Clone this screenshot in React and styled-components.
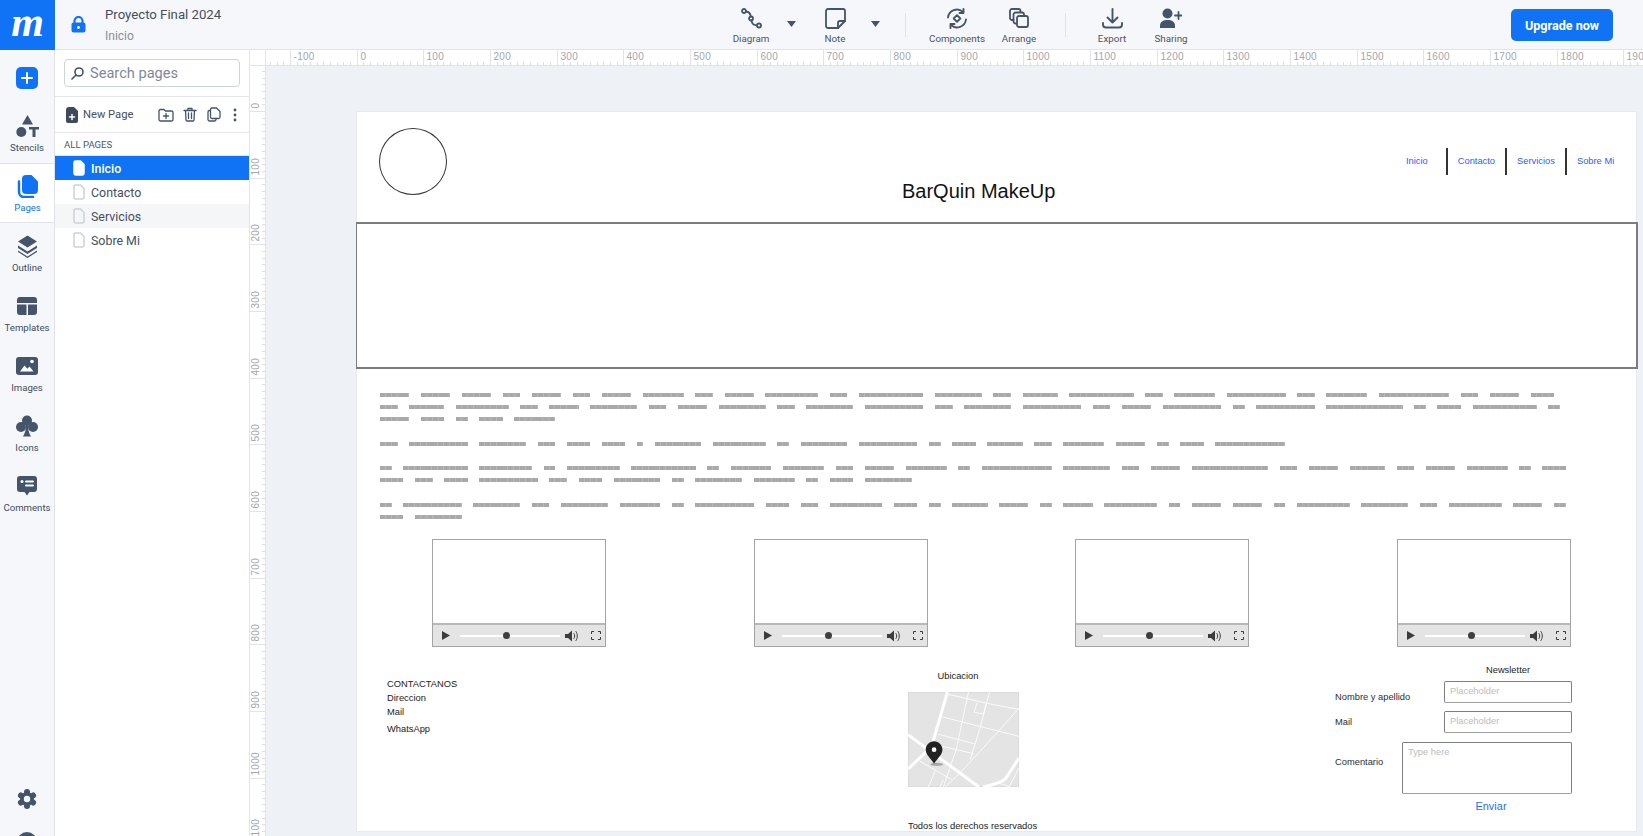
import React from "react";
import styled, { createGlobalStyle } from "styled-components";

const BLUE = "#1073f5";
const INK = "#44546a";

const Global = createGlobalStyle`
  html, body { margin: 0; padding: 0; height: 100%; overflow: hidden; background: #fff; }
  #root { height: 100%; }
  * { box-sizing: border-box; }
  body { font-family: Roboto, "Liberation Sans", sans-serif; color: #3a4656; }
`;

const Shell = styled.div`
  width: 1643px;
  height: 836px;
  display: flex;
  flex-direction: column;
  overflow: hidden;
`;

/* ---------- top bar ---------- */
const TopBar = styled.header`
  height: 50px;
  flex: none;
  display: flex;
  background: #f6f7fa;
  border-bottom: 1px solid #e0e3e9;
`;
const Logo = styled.div`
  width: 55px;
  height: 50px;
  background: ${BLUE};
  color: #fff;
  font: italic 700 42px/42px "Liberation Serif", serif;
  display: flex;
  align-items: center;
  justify-content: center;
  padding-bottom: 6px;
`;
const ProjectArea = styled.div`
  width: 666px;
  display: flex;
  align-items: center;
  padding-left: 16px;
`;
const ProjectText = styled.div`
  margin-left: 19px;
  display: flex;
  flex-direction: column;
  gap: 6px;
`;
const ProjectName = styled.div`
  font-size: 13.2px;
  line-height: 16px;
  color: #444f5e;
`;
const ProjectPage = styled.div`
  font-size: 12px;
  line-height: 14px;
  color: #87909d;
`;
const Tool = styled.div`
  width: ${(p) => p.$w}px;
  flex: none;
  display: flex;
  flex-direction: column;
  align-items: center;
  padding-top: 8px;
  color: ${INK};
`;
const ToolIcon = styled.div`
  height: 22px;
  display: flex;
  align-items: flex-start;
`;
const ToolLabel = styled.div`
  margin-top: 3px;
  font-size: 9.8px;
  line-height: 12px;
  color: #4a5564;
  white-space: nowrap;
`;
const Caret = styled.div`
  width: 24px;
  flex: none;
  display: flex;
  justify-content: center;
  padding: 21px 4px 0 0;
`;
const ToolDivider = styled.div`
  width: 1px;
  height: 24px;
  flex: none;
  margin: 13px ${(p) => p.$r}px 0 ${(p) => p.$l}px;
  background: #e0e3e9;
`;
const Upgrade = styled.button`
  margin: 9px 30px 0 auto;
  width: 102px;
  height: 32px;
  border: 0;
  border-radius: 5px;
  background: ${BLUE};
  color: #fff;
  font: 700 12.6px Roboto, sans-serif;
  padding: 0;
`;

/* ---------- body ---------- */
const Body = styled.div`
  flex: 1;
  display: flex;
  min-height: 0;
`;
const Rail = styled.nav`
  width: 55px;
  flex: none;
  display: flex;
  flex-direction: column;
  background: #f6f7fa;
  border-right: 1px solid #dfe2e8;
  overflow: hidden;
`;
const PlusSlot = styled.div`
  height: 53px;
  flex: none;
  padding: 17px 0 0 16px;
`;
const PlusButton = styled.div`
  width: 22px;
  height: 22px;
  border-radius: 5px;
  background: ${BLUE};
  display: flex;
  align-items: center;
  justify-content: center;
`;
const RailItem = styled.div`
  height: 60px;
  flex: none;
  display: flex;
  flex-direction: column;
  align-items: center;
  padding-top: 10px;
  margin-right: ${(p) => (p.$active ? "-1px" : "0")};
  background: ${(p) => (p.$active ? "#fff" : "transparent")};
  border-top: 1px solid ${(p) => (p.$active ? "#e0e3e9" : "transparent")};
  border-bottom: 1px solid ${(p) => (p.$active ? "#e0e3e9" : "transparent")};
  color: ${(p) => (p.$active ? BLUE : INK)};
`;
const RailIcon = styled.div`
  height: 24px;
  display: flex;
  align-items: center;
`;
const RailLabel = styled.div`
  margin-top: 4px;
  font-size: 9.6px;
  line-height: 12px;
  color: ${(p) => (p.$active ? BLUE : "#414d5d")};
  white-space: nowrap;
`;
const SettingsSlot = styled.div`
  margin-top: auto;
  height: 20px;
  flex: none;
  display: flex;
  justify-content: center;
  color: ${INK};
`;
const Avatar = styled.div`
  width: 20px;
  height: 20px;
  flex: none;
  margin: 23px auto -16px;
  border-radius: 50%;
  background: ${INK};
`;

const Panel = styled.aside`
  width: 195px;
  flex: none;
  background: #fff;
  border-right: 1px solid #e0e3e9;
  display: flex;
  flex-direction: column;
`;
const SearchRow = styled.div`
  height: 47px;
  flex: none;
  padding: 9px 9px 0;
  border-bottom: 1px solid #e6e8ed;
`;
const SearchBox = styled.div`
  height: 28px;
  display: flex;
  align-items: center;
  gap: 6px;
  padding-left: 6px;
  border: 1px solid #cfd3da;
  border-radius: 4px;
  color: #434f5f;
`;
const SearchText = styled.span`
  font-size: 14.6px;
  color: #7f8996;
`;
const ActionRow = styled.div`
  height: 36px;
  flex: none;
  display: flex;
  align-items: center;
  padding-left: 11px;
  border-bottom: 1px solid #e6e8ed;
  color: ${INK};
`;
const NewPage = styled.span`
  margin-left: 5px;
  margin-right: 23px;
  font-size: 11.2px;
  color: #44505f;
  width: 52px;
  white-space: nowrap;
`;
const ActionIcon = styled.span`
  display: flex;
  width: ${(p) => p.$w}px;
  justify-content: flex-start;
`;
const ListHeading = styled.div`
  height: 23px;
  flex: none;
  padding-left: 9px;
  display: flex;
  align-items: center;
  font-size: 9.6px;
  color: #4d5866;
  border-bottom: 1px solid #e6e8ed;
`;
const PageRow = styled.div`
  height: 24px;
  display: flex;
  align-items: center;
  gap: 6px;
  padding-left: 18px;
  font-size: 12.4px;
  background: ${(p) => (p.$active ? BLUE : p.$hover ? "#f5f6f8" : "transparent")};
  color: ${(p) => (p.$active ? "#fff" : "#45505f")};
  font-weight: ${(p) => (p.$active ? 500 : 400)};
`;

/* ---------- workspace ---------- */
const Workspace = styled.main`
  flex: 1;
  min-width: 0;
  display: grid;
  grid-template-columns: 16px 1fr;
  grid-template-rows: 16px 1fr;
  overflow: hidden;
`;
const Corner = styled.div`
  background: #fff;
  border-right: 1px solid #e0e3e9;
  border-bottom: 1px solid #e0e3e9;
`;
const RulerSvg = styled.svg`
  display: block;
  background: #fff;
  text {
    font: 10px "Liberation Sans", sans-serif;
    letter-spacing: 0.3px;
    fill: #a2a6ac;
  }
`;
const Canvas = styled.div`
  background: #eef1f6;
  padding: 46px 0 0 90px;
  overflow: hidden;
`;

/* ---------- wireframe page ---------- */
const Page = styled.section`
  width: 1281px;
  height: 721px;
  background: #fff;
  border: 1px solid #e6e9ee;
  margin: -1px 0 0 0;
  display: flex;
  flex-direction: column;
  font-family: "Liberation Sans", sans-serif;
  color: #222;
`;
const WireHead = styled.div`
  height: 110px;
  flex: none;
  position: relative;
`;
const WireCircle = styled.div`
  position: absolute;
  left: 22px;
  top: 16px;
  width: 68px;
  height: 67px;
  border-radius: 50%;
  border: 1px solid #333;
`;
const WireTitle = styled.div`
  position: absolute;
  left: 545px;
  top: 67px;
  font-size: 20px;
  line-height: 24px;
  color: #111;
  white-space: nowrap;
`;
const WireNav = styled.div`
  position: absolute;
  left: 1029px;
  top: 36px;
  display: flex;
`;
const WireLink = styled.div`
  width: 59.6px;
  height: 27px;
  display: flex;
  align-items: center;
  justify-content: center;
  padding-bottom: 2px;
  font-size: 9.33px;
  color: #2f5cff;
  border-left: 2px solid ${(p) => (p.$first ? "transparent" : "#333")};
`;
const Hero = styled.div`
  height: 147px;
  flex: none;
  margin-left: -1px;
  margin-right: -2px;
  border: 2px solid #7c7c7c;
  border-width: 2px 2px 2px 1px;
`;
const Greek = styled.div`
  margin: 24px 0 0 23px;
  display: flex;
  flex-direction: column;
  gap: 12.5px;
`;
const GreekPara = styled.div`
  display: flex;
  flex-direction: column;
`;
const GreekLine = styled.div`
  height: 12px;
  display: flex;
  gap: 11.65px;
`;
const GreekWord = styled.span`
  display: block;
  height: 4px;
  width: ${(p) => (p.$n * 5.85).toFixed(2)}px;
  background: repeating-linear-gradient(90deg, #a9a9a9 0 5px, #b8b8b8 5px 5.85px);
`;
const Videos = styled.div`
  margin: 12.5px 0 0 75px;
  display: flex;
  gap: 147.6px;
`;
const Video = styled.div`
  width: 174px;
  height: 108px;
  flex: none;
  display: flex;
  flex-direction: column;
  border: 1px solid #a4a4a4;
`;
const VideoScreen = styled.div`
  flex: 1;
  background: #fff;
`;
const VideoBar = styled.div`
  height: 23px;
  flex: none;
  display: flex;
  align-items: center;
  padding-left: 9px;
  background: #e4e4e4;
  border-top: 2px solid #b8b8b8;
  color: #3c3c3c;
`;
const Slider = styled.div`
  position: relative;
  width: 100px;
  height: 2px;
  margin: 0 5px 0 10px;
  background: #fff;
`;
const SliderThumb = styled.div`
  position: absolute;
  left: 43px;
  top: -3px;
  width: 7px;
  height: 7px;
  border-radius: 50%;
  background: #3f3f3f;
`;
const FullSpacer = styled.span`
  width: 13px;
  flex: none;
`;
const WireFooter = styled.div`
  flex: 1;
  position: relative;
  font-size: 9.33px;
  color: #222;
`;
const ContactBlock = styled.div`
  position: absolute;
  left: 30px;
  top: 30px;
  line-height: 14px;
`;
const WhatsApp = styled.div`
  margin-top: 3px;
`;
const MapBlock = styled.div`
  position: absolute;
  left: 551px;
  top: 23px;
  width: 111px;
`;
const MapTitle = styled.div`
  height: 12px;
  line-height: 12px;
  text-align: center;
  padding-right: 11px;
  margin-bottom: 10px;
`;
const MapBox = styled.svg`
  display: block;
  width: 111px;
  height: 95px;
`;
const Rights = styled.div`
  margin-top: 33px;
  line-height: 12px;
  white-space: nowrap;
`;
const FormBlock = styled.div`
  position: absolute;
  left: 978px;
  top: 17px;
  width: 237px;
  display: flex;
  flex-direction: column;
`;
const FormTitle = styled.div`
  height: 12px;
  line-height: 12px;
  margin: 0 0 5px 109px;
  text-align: center;
`;
const FormRow = styled.div`
  display: flex;
  justify-content: space-between;
  margin-bottom: ${(p) => p.$gap}px;
`;
const FormLabel = styled.div`
  line-height: 12px;
  margin-top: ${(p) => p.$top}px;
  color: #2a2f36;
`;
const Field = styled.div`
  width: ${(p) => p.$w}px;
  height: ${(p) => p.$h}px;
  padding: 4px 0 0 5px;
  border: 1px solid #7f7f7f;
  border-bottom-color: #a0a0a0;
  border-radius: 2px;
  color: #bcbcbc;
  line-height: 11px;
`;
const Send = styled.div`
  margin: 6px 0 0 126px;
  width: 60px;
  text-align: center;
  font-size: 11px;
  line-height: 13px;
  color: #2b6df5;
`;

/* ---------- drawings ---------- */
const IconSvg = styled.svg`
  display: block;
`;
const Svg = ({ w, h, vb, children, stroke, sw, fill = "none" }) => (
  <IconSvg
    width={w}
    height={h}
    viewBox={vb || `0 0 ${w} ${h}`}
    fill={fill}
    stroke={stroke}
    strokeWidth={sw}
    strokeLinecap="round"
    strokeLinejoin="round"
  >
    {children}
  </IconSvg>
);

const DiagramIcon = () => (
  <Svg w={21} h={21} stroke="currentColor" sw={1.8}>
    <circle cx="3" cy="3" r="2" />
    <circle cx="10" cy="10.500" r="2" />
    <circle cx="18" cy="17.500" r="2" />
    <path d="M5 3.500c3 .3 4.500 2 4.700 5M10.500 12.500c.3 3 2 4.800 5.500 5" />
  </Svg>
);
const NoteIcon = () => (
  <Svg w={21} h={21} stroke="currentColor" sw={1.8}>
    <path d="M3 1h15a2 2 0 0 1 2 2v10l-7 7H3a2 2 0 0 1-2-2V3a2 2 0 0 1 2-2z" />
    <path d="M20 13h-5a2 2 0 0 0-2 2v5" />
  </Svg>
);
const ComponentsIcon = () => (
  <Svg w={22} h={21} stroke="currentColor" sw={1.9}>
    <path d="M2 9.500A9 9 0 0 1 17 4" />
    <path d="M20 11.500A9 9 0 0 1 5 17" />
    <path d="M17.500 1v4h-4M4.500 20v-4h4" />
    <path d="M11 7.200l3.300 3.300L11 13.800l-3.300-3.300z" />
  </Svg>
);
const ArrangeIcon = () => (
  <Svg w={20} h={20} stroke="currentColor" sw={1.8}>
    <path d="M4.500 12H3a2 2 0 0 1-2-2V3a2 2 0 0 1 2-2h6.500a2 2 0 0 1 2 2v1" />
    <path d="M7.500 15.500H6.500a2 2 0 0 1-2-2V6.500a2 2 0 0 1 2-2h6.500a2 2 0 0 1 2 2v1" />
    <rect x="8" y="8" width="11" height="11" rx="2" />
  </Svg>
);
const ExportIcon = () => (
  <Svg w={21} h={21} stroke="currentColor" sw={1.9}>
    <path d="M10.500 1v13.500M5.500 9.500l5 5 5-5" />
    <path d="M1 15v1.500a3 3 0 0 0 3 3h13a3 3 0 0 0 3-3V15" />
  </Svg>
);
const SharingIcon = () => (
  <Svg w={22} h={21}>
    <circle cx="7.500" cy="5.500" r="5" fill="currentColor" />
    <path d="M0 20v-2.500C0 14 3 12 7.500 12S15 14 15 17.500V20z" fill="currentColor" />
    <path d="M18.500 4v7M15 7.500h7" stroke="currentColor" strokeWidth="1.800" />
  </Svg>
);
const CaretIcon = () => (
  <Svg w={9} h={6}>
    <path d="M0 0h9L4.500 6z" fill={INK} />
  </Svg>
);
const LockIcon = () => (
  <Svg w={15} h={17}>
    <path d="M3.500 7V5a4 4 0 0 1 8 0v2" stroke={BLUE} strokeWidth="2.200" />
    <rect x="0.500" y="6.500" width="14" height="10" rx="2" fill={BLUE} />
    <circle cx="7.500" cy="11.500" r="1.400" fill="#fff" />
  </Svg>
);
const StencilsIcon = () => (
  <Svg w={23} h={24}>
    <path d="M11.500 1l5.500 9.500H6z" fill="currentColor" />
    <circle cx="5.300" cy="18" r="5" fill="currentColor" />
    <path d="M13 13h10v2.500h-3.500V23h-3v-7.500H13z" fill="currentColor" />
  </Svg>
);
const PagesIcon = () => (
  <Svg w={22} h={23}>
    <path d="M9 0h5.500L21 6.500V15a4 4 0 0 1-4 4H9a4 4 0 0 1-4-4V4a4 4 0 0 1 4-4z" fill="currentColor" />
    <path d="M2 6.500V17a5 5 0 0 0 5 5h9" stroke="currentColor" strokeWidth="2.500" />
  </Svg>
);
const OutlineIcon = () => (
  <Svg w={21} h={23}>
    <path d="M10.500 0.500l9.500 6-9.500 6-9.500-6z" fill="currentColor" />
    <path d="M1 10.500l9.500 6 9.500-6v2.500l-9.500 6-9.500-6z" fill="currentColor" />
    <path d="M1 15.500l9.500 6 9.500-6v1.500l-9.500 6-9.500-6z" fill="currentColor" />
  </Svg>
);
const TemplatesIcon = () => (
  <Svg w={20} h={18}>
    <path d="M3 0h14a3 3 0 0 1 3 3v3H0V3a3 3 0 0 1 3-3z" fill="currentColor" />
    <path d="M0 7.500h9.500V18H3a3 3 0 0 1-3-3zM11 7.500h9V15a3 3 0 0 1-3 3h-6z" fill="currentColor" />
  </Svg>
);
const ImagesIcon = () => (
  <Svg w={22} h={18}>
    <rect width="22" height="18" rx="3" fill="currentColor" />
    <path d="M4 14.500l4.500-6 3 3.200 2-2.200 4 5z" fill="#fff" />
    <circle cx="16" cy="4.500" r="1.800" fill="#fff" />
  </Svg>
);
const ClubIcon = () => (
  <Svg w={22} h={22}>
    <circle cx="11" cy="5.500" r="5" fill="currentColor" />
    <circle cx="5" cy="12" r="5" fill="currentColor" />
    <circle cx="17" cy="12" r="5" fill="currentColor" />
    <path d="M10 10h2c0 4 .8 8 3 11.500H7c2.200-3.500 3-7.500 3-11.500z" fill="currentColor" />
  </Svg>
);
const CommentsIcon = () => (
  <Svg w={20} h={20}>
    <path d="M3 0h14a3 3 0 0 1 3 3v10a3 3 0 0 1-3 3h-4.500L10 19.500 7.500 16H3a3 3 0 0 1-3-3V3a3 3 0 0 1 3-3z" fill="currentColor" />
    <circle cx="5" cy="5.500" r="1.500" fill="#fff" />
    <path d="M9 5.500h7M9 9.500h7" stroke="#fff" strokeWidth="2" />
  </Svg>
);
const GearIcon = () => (
  <Svg w={20} h={20}>
    {[0, 60, 120, 180, 240, 300].map((a) => (
      <circle key={a} cx="10" cy="3" r="3" fill="currentColor" transform={`rotate(${a} 10 10)`} />
    ))}
    <circle cx="10" cy="10" r="7" fill="currentColor" />
    <circle cx="10" cy="10" r="3.200" fill="#f6f7fa" />
  </Svg>
);
const SearchIcon = () => (
  <Svg w={13} h={13} stroke="currentColor" sw={1.6}>
    <circle cx="8" cy="5" r="4" />
    <path d="M5 8l-4 4" />
  </Svg>
);
const DocIcon = ({ on }) => (
  <Svg w={12} h={16}>
    <path
      d="M2.500 1H7.500L11 4.500V13a2 2 0 0 1-2 2H3a2 2 0 0 1-2-2V2.500A1.500 1.500 0 0 1 2.500 1z"
      stroke={on ? "#fff" : "#cdd1d7"}
      strokeWidth="1.500"
      fill={on ? "#fff" : "none"}
    />
  </Svg>
);
const NewDocIcon = () => (
  <Svg w={12} h={16}>
    <path d="M3 0h5l4 4v10a2 2 0 0 1-2 2H2a2 2 0 0 1-2-2V3a3 3 0 0 1 3-3z" fill="#3d4a5c" />
    <path d="M6 7.500v5M3.500 10h5" stroke="#fff" strokeWidth="1.500" />
  </Svg>
);
const FolderPlus = () => (
  <Svg w={16} h={14} stroke="currentColor" sw={1.3}>
    <path d="M1 3a1.500 1.500 0 0 1 1.500-1.500H6L7.500 3h6A1.500 1.500 0 0 1 15 4.500v7a1.500 1.500 0 0 1-1.500 1.500h-11A1.500 1.500 0 0 1 1 11.500z" />
    <path d="M8 5.500v5M5.500 8h5" />
  </Svg>
);
const TrashIcon = () => (
  <Svg w={14} h={15} stroke="currentColor" sw={1.3}>
    <path d="M1 3.500h12M5 3.500V1.500h4v2M2.500 3.500l.5 9.500a1 1 0 0 0 1 1h6a1 1 0 0 0 1-1l.5-9.500M5.500 6v5.500M8.500 6v5.500" />
  </Svg>
);
const CopyIcon = () => (
  <Svg w={14} h={15} stroke="currentColor" sw={1.3}>
    <path d="M5 1h4.500L13 4.500V10a1.500 1.500 0 0 1-1.500 1.500H5A1.500 1.500 0 0 1 3.500 10V2.500A1.500 1.500 0 0 1 5 1z" />
    <path d="M3.500 3.500h-1A1.500 1.500 0 0 0 1 5v7.500A1.500 1.500 0 0 0 2.500 14h5A1.500 1.500 0 0 0 9 12.500v-1" />
  </Svg>
);
const DotsIcon = () => (
  <Svg w={4} h={14}>
    <circle cx="2" cy="2" r="1.400" fill="currentColor" />
    <circle cx="2" cy="7" r="1.400" fill="currentColor" />
    <circle cx="2" cy="12" r="1.400" fill="currentColor" />
  </Svg>
);
const PlayIcon = () => (
  <Svg w={8} h={9}>
    <path d="M0 0l8 4.500L0 9z" fill="currentColor" />
  </Svg>
);
const VolumeIcon = () => (
  <Svg w={13} h={12}>
    <path d="M0 4h3l4-3.500v11L3 8H0z" fill="currentColor" />
    <path d="M9 3.500c1 1.500 1 3.500 0 5M11 1.500c1.800 2.500 1.800 6.500 0 9" stroke="currentColor" strokeWidth="1" />
  </Svg>
);
const FullIcon = () => (
  <Svg w={10} h={9} stroke="currentColor" sw={1}>
    <path d="M.5 3V.5H3M7 .5h2.500V3M.5 6v2.500H3M7 8.500h2.500V6" strokeLinecap="butt" strokeLinejoin="miter" />
  </Svg>
);
const MapArt = () => (
  <MapBox viewBox="84 37 332 285" preserveAspectRatio="none">
    <rect x="84" y="37" width="332" height="285" fill="#e4e4e4" stroke="#d2d2d2" strokeWidth="3" />
    <g stroke="#fff" fill="none">
      <g strokeWidth="9">
        <path d="M202 37l-45 155" />
        <path d="M84 165L296 322" />
        <path d="M84 268l66-62" />
        <path d="M416 235l-40 62c-12 12-35 18-68 25" />
      </g>
      <g strokeWidth="2.500">
        <path d="M205 44l120 28 90 17" />
        <path d="M188 112l228 58" />
        <path d="M175 164l110 29" />
        <path d="M165 195l115 27" />
        <path d="M265 37l-37 173-38 112" />
        <path d="M328 37l-30 113-28 90" />
        <path d="M416 85l-66 75-110 120-45 42" />
        <path d="M290 70l-8 28 28 5 8-33" />
        <path d="M120 245l95 55" />
        <path d="M165 275l-20 47" />
        <path d="M190 300l-10 22" />
        <path d="M416 265l-30 57" />
        <path d="M360 312l30 10" />
      </g>
    </g>
    <ellipse cx="170" cy="254" rx="19" ry="5" fill="#a8a8a8" />
    <path d="M162 185c14 0 25 11 25 25 0 15-15 25-25 42-10-17-25-27-25-42 0-14 11-25 25-25z" fill="#222" />
    <circle cx="162" cy="210" r="7" fill="#fff" />
  </MapBox>
);

/* ---------- rulers ---------- */
const STEP = 200 / 30;
const HRuler = () => {
  const ticks = [];
  for (let i = -13; i < 196; i++) ticks.push(i);
  return (
    <RulerSvg width={1377} height={16}>
      {ticks.map((i) => {
        const x = Math.round(90.7 + i * STEP) + 0.5;
        const major = i % 10 === 0;
        return (
          <g key={i}>
            <line x1={x} x2={x} y1={major ? 0 : 12} y2={16} stroke={major ? "#e0e3e9" : "#dcdfe4"} />
            {major && (
              <text x={x + 3} y={10}>
                {i * 10}
              </text>
            )}
          </g>
        );
      })}
      <line x1={0} x2={1377} y1={15.5} y2={15.5} stroke="#e0e3e9" />
    </RulerSvg>
  );
};
const VRuler = () => {
  const ticks = [];
  for (let i = -6; i < 112; i++) ticks.push(i);
  return (
    <RulerSvg width={16} height={770}>
      {ticks.map((i) => {
        const y = Math.round(45 + i * STEP) + 0.5;
        const major = i % 10 === 0;
        return (
          <g key={i}>
            <line y1={y} y2={y} x1={major ? 0 : 12} x2={16} stroke={major ? "#e0e3e9" : "#dcdfe4"} />
            {major && (
              <text transform={`translate(9 ${y - 3}) rotate(-90)`}>{i * 10}</text>
            )}
          </g>
        );
      })}
      <line x1={15.5} x2={15.5} y1={0} y2={770} stroke="#e0e3e9" />
    </RulerSvg>
  );
};

/* ---------- data ---------- */
const GREEK = [
  [
    [5,5,5,3,5,3,5,7,3,5,9,3,11,8,3,6,11,3,7,10,3,7,12,3,5,4],
    [3,6,9,3,5,8,3,5,8,3,8,10,3,8,10,3,5,10,2,10,13,2,4,11,2],
    [5,4,2,4,7],
  ],
  [[3,10,8,3,4,4,1,8,9,2,8,10,2,4,6,3,7,5,2,4,12]],
  [
    [2,11,9,2,9,11,2,7,7,3,5,7,2,12,8,3,5,13,3,5,6,3,5,7,2,4],
    [4,3,4,10,3,4,8,2,8,7,2,4,8],
  ],
  [
    [2,10,8,3,8,7,2,10,4,3,9,4,2,6,5,2,5,9,2,5,5,2,9,8,3,9,5,2],
    [4,8],
  ],
];
const TOOLS_RAIL = [
  ["Stencils", StencilsIcon],
  ["Pages", PagesIcon, true],
  ["Outline", OutlineIcon],
  ["Templates", TemplatesIcon],
  ["Images", ImagesIcon],
  ["Icons", ClubIcon],
  ["Comments", CommentsIcon],
];
const PAGES = [
  { name: "Inicio", active: true },
  { name: "Contacto" },
  { name: "Servicios", hover: true },
  { name: "Sobre Mi" },
];

export default function App() {
  return (
    <Shell>
      <Global />
      <TopBar>
        <Logo>m</Logo>
        <ProjectArea>
          <LockIcon />
          <ProjectText>
            <ProjectName>Proyecto Final 2024</ProjectName>
            <ProjectPage>Inicio</ProjectPage>
          </ProjectText>
        </ProjectArea>
        <Tool $w={60}>
          <ToolIcon><DiagramIcon /></ToolIcon>
          <ToolLabel>Diagram</ToolLabel>
        </Tool>
        <Caret><CaretIcon /></Caret>
        <Tool $w={60}>
          <ToolIcon><NoteIcon /></ToolIcon>
          <ToolLabel>Note</ToolLabel>
        </Tool>
        <Caret><CaretIcon /></Caret>
        <ToolDivider $l={16} $r={18} />
        <Tool $w={66}>
          <ToolIcon><ComponentsIcon /></ToolIcon>
          <ToolLabel>Components</ToolLabel>
        </Tool>
        <Tool $w={58}>
          <ToolIcon><ArrangeIcon /></ToolIcon>
          <ToolLabel>Arrange</ToolLabel>
        </Tool>
        <ToolDivider $l={17} $r={16} />
        <Tool $w={60}>
          <ToolIcon><ExportIcon /></ToolIcon>
          <ToolLabel>Export</ToolLabel>
        </Tool>
        <Tool $w={58}>
          <ToolIcon><SharingIcon /></ToolIcon>
          <ToolLabel>Sharing</ToolLabel>
        </Tool>
        <Upgrade>Upgrade now</Upgrade>
      </TopBar>
      <Body>
        <Rail>
          <PlusSlot>
            <PlusButton>
              <Svg w={12} h={12}>
                <path d="M6 1v10M1 6h10" stroke="#fff" strokeWidth="2" />
              </Svg>
            </PlusButton>
          </PlusSlot>
          {TOOLS_RAIL.map(([label, Icon, active]) => (
            <RailItem key={label} $active={active}>
              <RailIcon><Icon /></RailIcon>
              <RailLabel $active={active}>{label}</RailLabel>
            </RailItem>
          ))}
          <SettingsSlot><GearIcon /></SettingsSlot>
          <Avatar />
        </Rail>
        <Panel>
          <SearchRow>
            <SearchBox>
              <SearchIcon />
              <SearchText>Search pages</SearchText>
            </SearchBox>
          </SearchRow>
          <ActionRow>
            <NewDocIcon />
            <NewPage>New Page</NewPage>
            <ActionIcon $w={25}><FolderPlus /></ActionIcon>
            <ActionIcon $w={24}><TrashIcon /></ActionIcon>
            <ActionIcon $w={26}><CopyIcon /></ActionIcon>
            <ActionIcon $w={4}><DotsIcon /></ActionIcon>
          </ActionRow>
          <ListHeading>ALL PAGES</ListHeading>
          {PAGES.map((p) => (
            <PageRow key={p.name} $active={p.active} $hover={p.hover}>
              <DocIcon on={p.active} />
              {p.name}
            </PageRow>
          ))}
        </Panel>
        <Workspace>
          <Corner />
          <HRuler />
          <VRuler />
          <Canvas>
            <Page>
              <WireHead>
                <WireCircle />
                <WireTitle>BarQuin MakeUp</WireTitle>
                <WireNav>
                  <WireLink $first>Inicio</WireLink>
                  <WireLink>Contacto</WireLink>
                  <WireLink>Servicios</WireLink>
                  <WireLink>Sobre Mi</WireLink>
                </WireNav>
              </WireHead>
              <Hero />
              <Greek>
                {GREEK.map((para, i) => (
                  <GreekPara key={i}>
                    {para.map((line, j) => (
                      <GreekLine key={j}>
                        {line.map((n, k) => (
                          <GreekWord key={k} $n={n} />
                        ))}
                      </GreekLine>
                    ))}
                  </GreekPara>
                ))}
              </Greek>
              <Videos>
                {[0, 1, 2, 3].map((i) => (
                  <Video key={i}>
                    <VideoScreen />
                    <VideoBar>
                      <PlayIcon />
                      <Slider><SliderThumb /></Slider>
                      <VolumeIcon />
                      <FullSpacer />
                      <FullIcon />
                    </VideoBar>
                  </Video>
                ))}
              </Videos>
              <WireFooter>
                <ContactBlock>
                  <div>CONTACTANOS</div>
                  <div>Direccion</div>
                  <div>Mail</div>
                  <WhatsApp>WhatsApp</WhatsApp>
                </ContactBlock>
                <MapBlock>
                  <MapTitle>Ubicacion</MapTitle>
                  <MapArt />
                  <Rights>Todos los derechos reservados</Rights>
                </MapBlock>
                <FormBlock>
                  <FormTitle>Newsletter</FormTitle>
                  <FormRow $gap={8}>
                    <FormLabel $top={10}>Nombre y apellido</FormLabel>
                    <Field $w={128} $h={22}>Placeholder</Field>
                  </FormRow>
                  <FormRow $gap={9}>
                    <FormLabel $top={5}>Mail</FormLabel>
                    <Field $w={128} $h={22}>Placeholder</Field>
                  </FormRow>
                  <FormRow $gap={0}>
                    <FormLabel $top={14}>Comentario</FormLabel>
                    <Field $w={170} $h={52}>Type here</Field>
                  </FormRow>
                  <Send>Enviar</Send>
                </FormBlock>
              </WireFooter>
            </Page>
          </Canvas>
        </Workspace>
      </Body>
    </Shell>
  );
}
